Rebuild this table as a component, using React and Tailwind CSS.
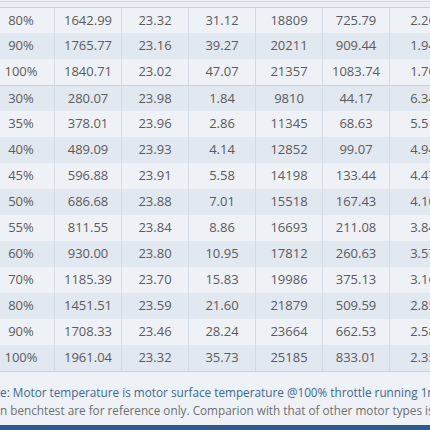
import React from "react";

const g1 = [
  ["80%", "1642.99", "23.32", "31.12", "18809", "725.79", "2.26"],
  ["90%", "1765.77", "23.16", "39.27", "20211", "909.44", "1.94"],
  ["100%", "1840.71", "23.02", "47.07", "21357", "1083.74", "1.70"],
];
const g2 = [
  ["30%", "280.07", "23.98", "1.84", "9810", "44.17", "6.34"],
  ["35%", "378.01", "23.96", "2.86", "11345", "68.63", "5.51"],
  ["40%", "489.09", "23.93", "4.14", "12852", "99.07", "4.94"],
  ["45%", "596.88", "23.91", "5.58", "14198", "133.44", "4.47"],
  ["50%", "686.68", "23.88", "7.01", "15518", "167.43", "4.10"],
  ["55%", "811.55", "23.84", "8.86", "16693", "211.08", "3.84"],
  ["60%", "930.00", "23.80", "10.95", "17812", "260.63", "3.57"],
  ["70%", "1185.39", "23.70", "15.83", "19986", "375.13", "3.16"],
  ["80%", "1451.51", "23.59", "21.60", "21879", "509.59", "2.85"],
  ["90%", "1708.33", "23.46", "28.24", "23664", "662.53", "2.58"],
  ["100%", "1961.04", "23.32", "35.73", "25185", "833.01", "2.35"],
];

function Row({ cells, dark, top }) {
  return (
    <div
      className={
        "flex h-[26px] " +
        (dark ? "bg-[#e2e8f0] " : "bg-[#eef2f7] ") +
        (top ? "border-t border-[#c9d3df]" : "")
      }
    >
      {cells.map((c, i) => (
        <div
          key={i}
          className="w-[67px] shrink-0 flex items-center justify-center border-r border-[#d3dbe5] text-[13px] text-[#5b5b5b]"
        >
          {c}
        </div>
      ))}
    </div>
  );
}

export default function App() {
  return (
    <div
      className="w-[430px] h-[430px] overflow-hidden bg-[#eef2f7] flex flex-col"
      style={{ fontFamily: "'Open Sans', sans-serif" }}
    >
      <div className="h-[6px] bg-[#e9eef4] border-t border-[#d3dbe5] mt-[1px]" />
      <div className="ml-[-12px] flex flex-col border-b border-[#c9d3df]">
        {g1.map((r, i) => (
          <Row key={"a" + i} cells={r} dark={i % 2 === 1} top={i === 0} />
        ))}
        {g2.map((r, i) => (
          <Row key={"b" + i} cells={r} dark={i % 2 === 0} top={i === 0} />
        ))}
      </div>
      <div className="ml-[-20px] mt-[11px] text-[11.75px] leading-[18px] whitespace-nowrap">
        <div className="text-[#3b6996]">
          Note: Motor temperature is motor surface temperature @100% throttle running 1min.
        </div>
        <div className="text-[#6f6f6f] ml-[17px]">
          in benchtest are for reference only. Comparion with that of other motor types is not advisable.
        </div>
      </div>
      <div className="mt-auto h-[5px] bg-[#2d5b8c]" />
    </div>
  );
}
